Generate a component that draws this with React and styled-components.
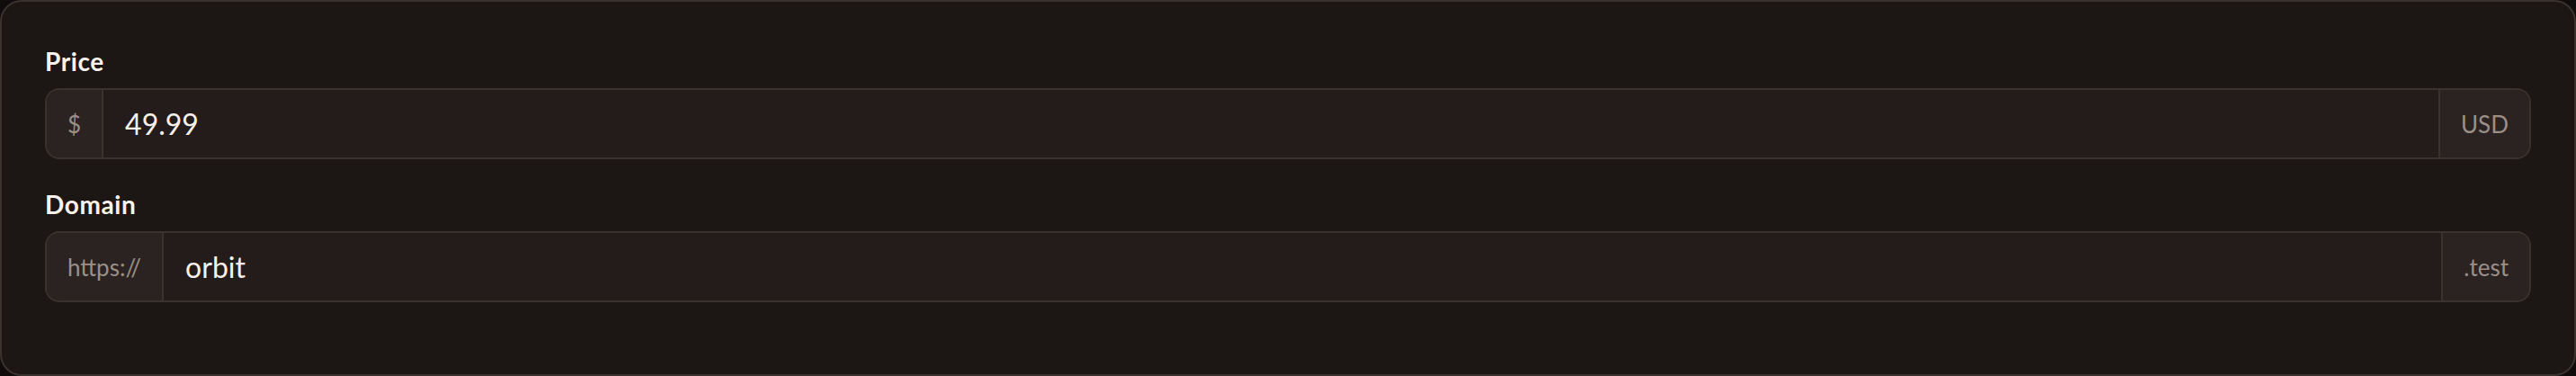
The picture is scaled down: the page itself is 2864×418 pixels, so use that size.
import React from "react";
import styled, { createGlobalStyle } from "styled-components";

const GlobalStyle = createGlobalStyle`
  *, *::before, *::after { box-sizing: border-box; }
  html, body {
    margin: 0;
    padding: 0;
    background: #0f0c0b;
    font-family: "Lato", "Inter", sans-serif;
  }
`;

const Card = styled.section`
  display: flex;
  flex-direction: column;
  gap: 32px;
  height: 100vh;
  padding: 48px;
  background: #1c1714;
  border: 2px solid #3a322e;
  border-radius: 24px;
`;

const Field = styled.div`
  display: flex;
  flex-direction: column;
  gap: 12px;
`;

const Label = styled.label`
  font-size: 28px;
  line-height: 36px;
  font-weight: 700;
  letter-spacing: 0.6px;
  color: #f7f2ed;
`;

const Group = styled.div`
  display: flex;
  align-items: stretch;
  height: 79px;
  border: 2px solid #3a322e;
  border-radius: 16px;
  overflow: hidden;
  background: #231c1a;
`;

const Addon = styled.span`
  display: flex;
  align-items: center;
  padding: 0 23px;
  background: #2a2321;
  color: #9b8f87;
  font-size: 26px;
  white-space: nowrap;
  ${({ $side }) =>
    $side === "start"
      ? "border-right: 2px solid #3a322e;"
      : "border-left: 2px solid #3a322e;"}
`;

const Input = styled.input`
  flex: 1;
  min-width: 0;
  border: 0;
  outline: none;
  padding: 0 24px;
  background: transparent;
  color: #f5f0eb;
  font: inherit;
  font-size: 32px;
`;

function AddonField({ id, label, prefix, suffix, value }) {
  return (
    <Field>
      <Label htmlFor={id}>{label}</Label>
      <Group>
        <Addon $side="start">{prefix}</Addon>
        <Input id={id} defaultValue={value} />
        <Addon $side="end">{suffix}</Addon>
      </Group>
    </Field>
  );
}

export default function App() {
  return (
    <>
      <GlobalStyle />
      <Card>
        <AddonField id="price" label="Price" prefix="$" suffix="USD" value="49.99" />
        <AddonField id="domain" label="Domain" prefix="https://" suffix=".test" value="orbit" />
      </Card>
    </>
  );
}
